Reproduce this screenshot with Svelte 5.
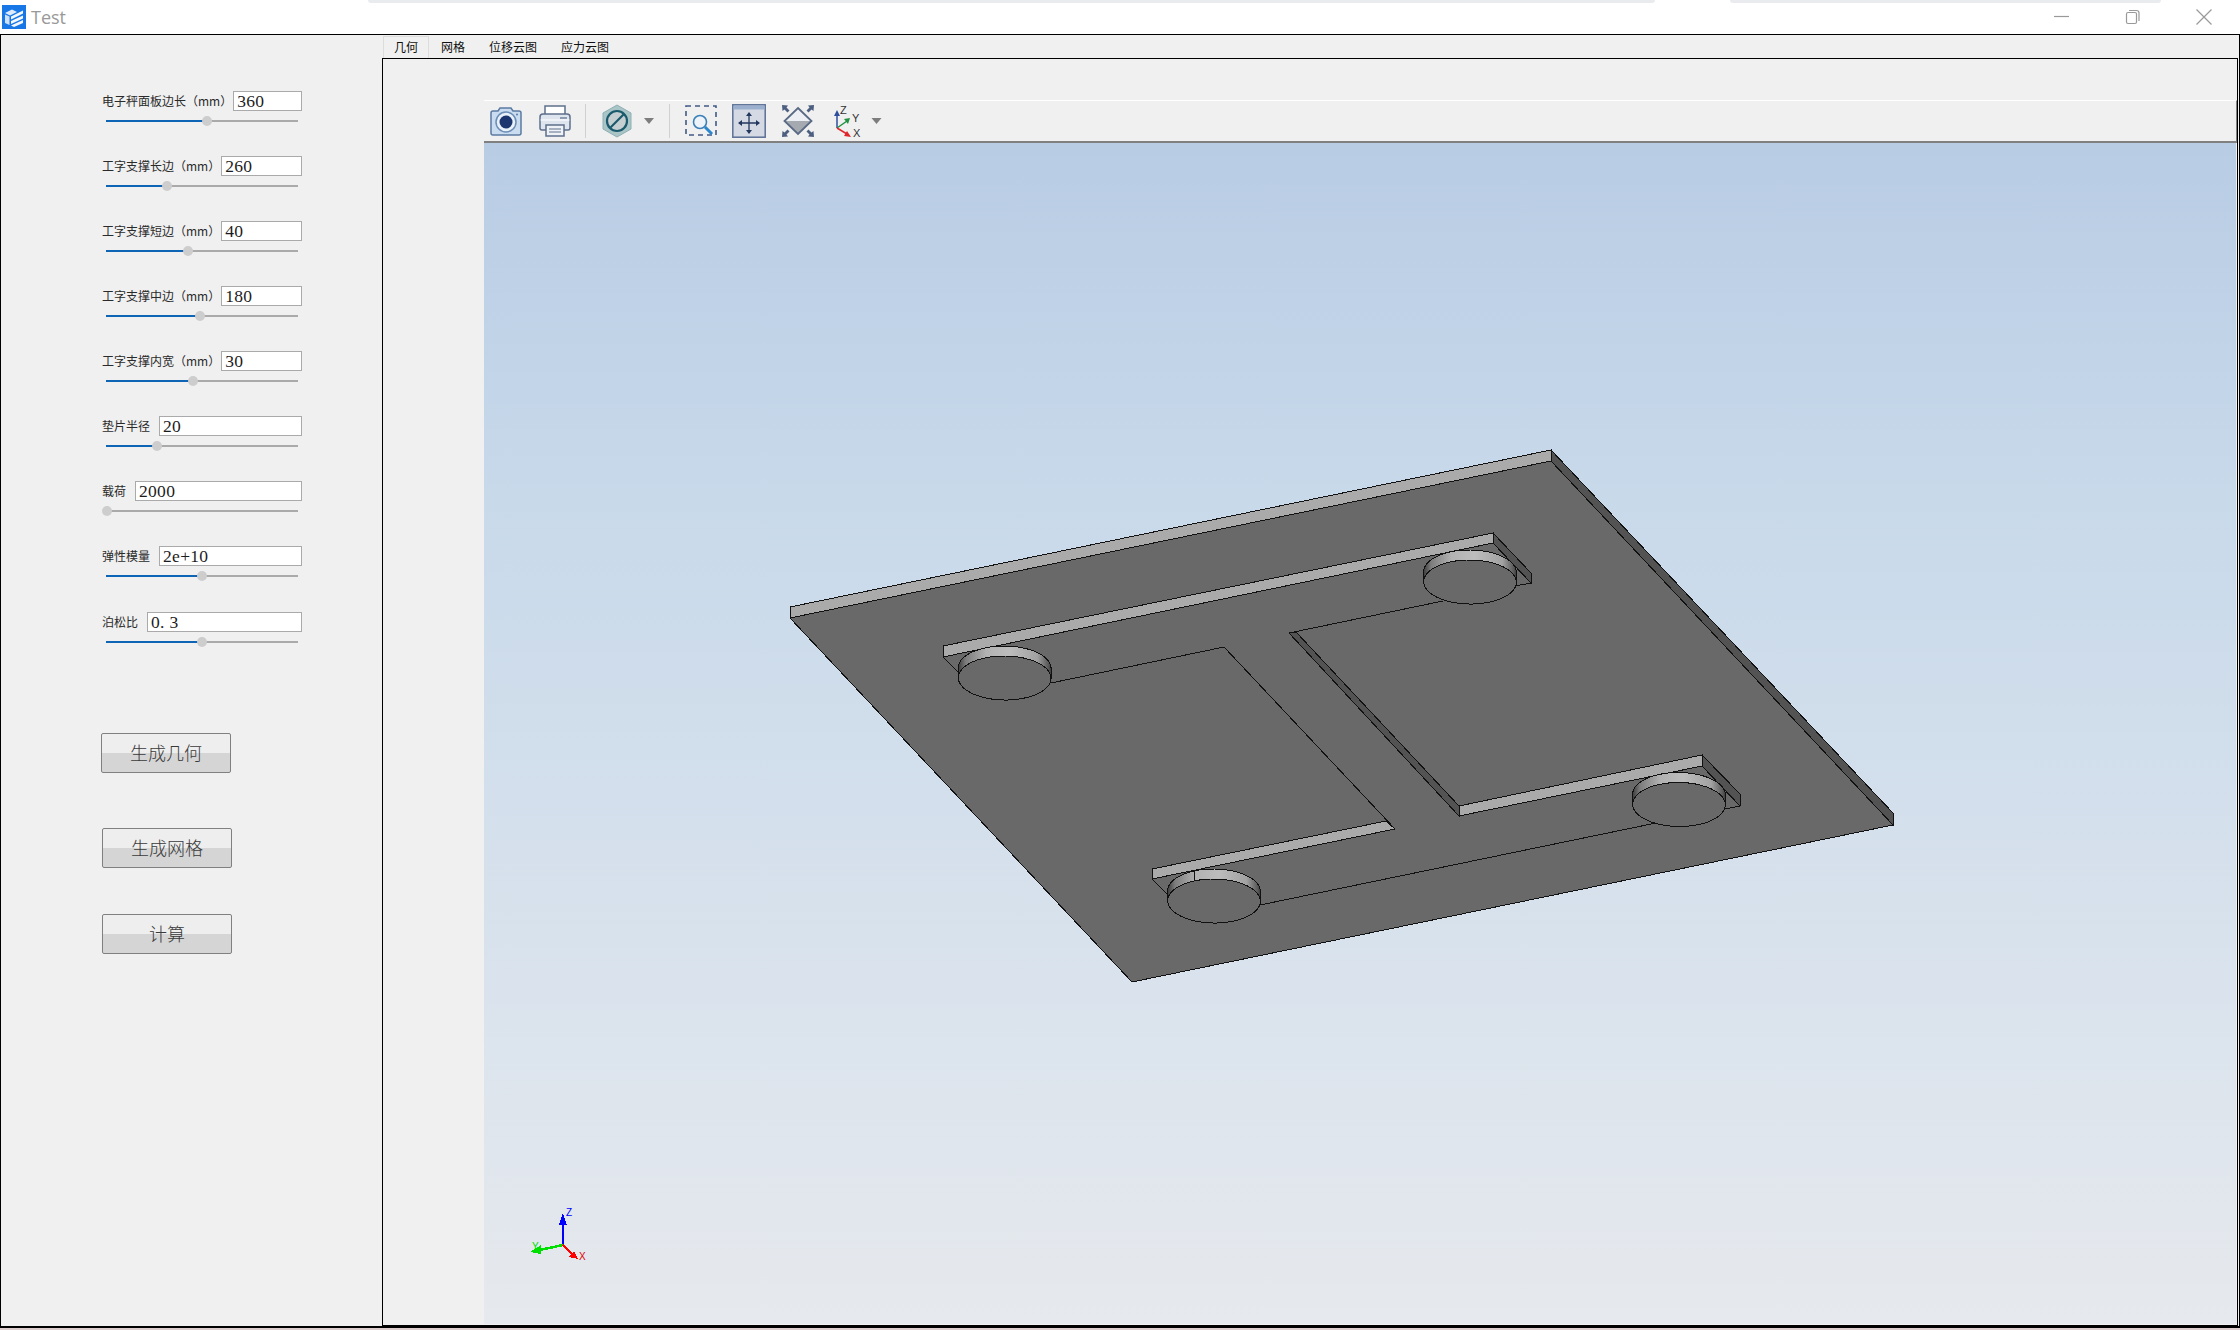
<script lang="ts">
	const fields = [
		{ label: '电子秤面板边长（mm）', value: '360', thumb: 101 },
		{ label: '工字支撑长边（mm）', value: '260', thumb: 61 },
		{ label: '工字支撑短边（mm）', value: '40', thumb: 82 },
		{ label: '工字支撑中边（mm）', value: '180', thumb: 94 },
		{ label: '工字支撑内宽（mm）', value: '30', thumb: 87 },
		{ label: '垫片半径', value: '20', thumb: 51 },
		{ label: '载荷', value: '2000', thumb: 1 },
		{ label: '弹性模量', value: '2e+10', thumb: 96 },
		{ label: '泊松比', value: '0. 3', thumb: 96 }
	];
	const actions = ['生成几何', '生成网格', '计算'];
	const tabs = ['几何', '网格', '位移云图', '应力云图'];

	// plate axes in screen px per mm, taken from the plate corners
	const ux = 761 / 360;
	const uy = -157 / 360;
	const vx = 342 / 360;
	const vy = 364 / 360;
	const R = 20;
	const H = 10;

	const pad = [
		{ x: 1004.7, y: 678 },
		{ x: 1470, y: 582 },
		{ x: 1214, y: 901 },
		{ x: 1679, y: 804.5 }
	];

	function pt(c: { x: number; y: number }, t: number, dz = 0) {
		const x = c.x + R * (Math.cos(t) * ux + Math.sin(t) * vx);
		const y = c.y + R * (Math.cos(t) * uy + Math.sin(t) * vy) - dz;
		return `${x.toFixed(1)} ${y.toFixed(1)}`;
	}

	function ellipse(c: { x: number; y: number }, dz = 0) {
		const pts = [];
		for (let i = 0; i < 72; i++) pts.push(pt(c, (i / 72) * Math.PI * 2, dz));
		return 'M' + pts.join('L') + 'Z';
	}

	// side of the pad: upper half of the raised rim, closed down to the lower ellipse
	function side(c: { x: number; y: number }) {
		const t0 = Math.atan2(vx, ux);
		const pts = [];
		for (let i = 0; i <= 36; i++) pts.push(pt(c, t0 - (i / 36) * Math.PI, H));
		pts.push(pt(c, t0 - Math.PI, 0));
		pts.push(pt(c, t0, 0));
		return 'M' + pts.join('L') + 'Z';
	}
</script>

<div class="window">
	<header class="titlebar">
		<span class="ghost ghost-a"></span>
		<span class="ghost ghost-b"></span>
		<svg class="logo" viewBox="0 0 24 24">
			<rect width="24" height="24" fill="#1877e6" />
			<path d="M3 8 10 4.5 15 7 8 10.5Z" fill="#dfeafa" />
			<path d="M3 9.5 7.5 11.5V20L3 18Z" fill="#cfe0f7" />
			<path d="M9 11.5 21 5.5V8.5L9 14.5Z M9 16 21 10.5V13.5L9 19Z M9 20.5 21 15V18L12 22Z" fill="#f4f8fe" />
		</svg>
		<span class="title">Test</span>
		<div class="controls">
			<svg viewBox="0 0 16 16"><path d="M0 7.5H15" /></svg>
			<svg viewBox="0 0 16 16"><rect x="1.5" y="3.5" width="10" height="11" rx="1.5" /><path d="M4 1.5H11.5Q14 1.5 14 4V12" /></svg>
			<svg viewBox="0 0 16 16"><path d="M.5 .5 15.5 15.5M15.5 .5 .5 15.5" /></svg>
		</div>
	</header>

	<div class="body">
		<aside class="params">
			{#each fields as f}
				<div class="field">
					<div class="line">
						<label for={f.label} class:unit={f.label.endsWith('）')}>{f.label}</label>
						<input id={f.label} value={f.value} />
					</div>
					<div class="track">
						<div class="fill" style="width:{f.thumb}px"></div>
						<div class="thumb" style="left:{f.thumb}px"></div>
					</div>
				</div>
			{/each}
			<div class="actions">
				{#each actions as a}
					<button>{a}</button>
				{/each}
			</div>
		</aside>

		<section class="main">
			<nav class="tabs">
				{#each tabs as t, i}
					<span class="tab" class:active={i === 0}>{t}</span>
				{/each}
			</nav>
			<div class="page">
				<div class="toolbar">
					<svg class="tool" viewBox="0 0 34 34">
						<path d="M2 9Q2 7 4 7H9L11 4H22L24 7H30Q32 7 32 9V29Q32 31 30 31H4Q2 31 2 29Z" fill="#c9dcf0" stroke="#5b7ba3" stroke-width="1.5" />
						<circle cx="17" cy="18" r="10" fill="#e9f1f9" stroke="#6c8db6" stroke-width="1.5" />
						<circle cx="17" cy="18" r="6.5" fill="#1c366f" />
						<circle cx="28" cy="10.5" r="1" fill="#5b7ba3" />
					</svg>
					<svg class="tool" viewBox="0 0 34 34">
						<rect x="7" y="2" width="20" height="10" fill="#fff" stroke="#5d6f8b" stroke-width="1.5" />
						<path d="M2 13Q2 10 5 10H29Q32 10 32 13V24Q32 26 30 26H4Q2 26 2 24Z" fill="#dfe5ee" stroke="#5d6f8b" stroke-width="1.5" />
						<rect x="22" y="13" width="7" height="2" fill="#8d9bb0" />
						<path d="M2.5 16H31.5" stroke="#fff" />
						<rect x="8" y="21" width="18" height="11" fill="#eef1f6" stroke="#5d6f8b" stroke-width="1.5" />
						<path d="M11 25H23M11 28H23" stroke="#8d9bb0" stroke-width="1.5" />
					</svg>
					<span class="sep"></span>
					<svg class="tool" viewBox="0 0 34 34">
						<path d="M17 1 31 9V25L17 33 3 25V9Z" fill="#a9c5c7" stroke="#8fb0b3" />
						<circle cx="17" cy="17" r="10" fill="#c5cfd1" stroke="#1a5a6c" stroke-width="2.2" />
						<path d="M10 24 24 10" stroke="#1a5a6c" stroke-width="2.2" />
					</svg>
					<svg class="caret" viewBox="0 0 10 6"><path d="M0 0H10L5 6Z" /></svg>
					<span class="sep sep-b"></span>
					<svg class="tool" viewBox="0 0 34 34">
						<rect x="2" y="2" width="30" height="29" fill="none" stroke="#415a85" stroke-width="1.6" stroke-dasharray="5 4" />
						<circle cx="16" cy="18" r="6.5" fill="#eef3f9" stroke="#3b7fb8" stroke-width="1.6" />
						<path d="M21 23 28 30" stroke="#2c86cc" stroke-width="3" />
					</svg>
					<svg class="tool fit" viewBox="0 0 34 34">
						<rect x=".8" y=".8" width="32.4" height="32.4" fill="#d4d9e3" stroke="#5b7096" stroke-width="1.5" />
						<rect x="1.5" y="1.5" width="31" height="4" fill="#9bb0ce" />
						<path d="M17 9V29M7 19H27" stroke="#23375f" stroke-width="1.3" />
						<path d="M17 8 20 12H14ZM17 30 14 26H20ZM6 19 10 16V22ZM28 19 24 22V16Z" fill="#23375f" />
					</svg>
					<svg class="tool" viewBox="0 0 34 34">
						<path d="M17 4 30.5 17H3.5Z" fill="#eceff3" />
						<path d="M3.5 17H30.5L17 30Z" fill="#a5a9b0" />
						<path d="M17 4 30.5 17 17 30 3.5 17Z" fill="none" stroke="#5a6a85" stroke-width="1.8" />
						<path d="M1 1 7 1.500 5.500 3.500 8.500 6.500 6.500 8.500 3.500 5.500 1.500 7Z" fill="#4d5f80" />
						<path d="M33 1 27 1.500 28.500 3.500 25.500 6.500 27.500 8.500 30.500 5.500 32.500 7Z" fill="#4d5f80" />
						<path d="M1 33 7 32.500 5.500 30.500 8.500 27.500 6.500 25.500 3.500 28.500 1.500 27Z" fill="#4d5f80" />
						<path d="M33 33 27 32.500 28.500 30.500 25.500 27.500 27.500 25.500 30.500 28.500 32.500 27Z" fill="#4d5f80" />
					</svg>
					<svg class="tool axes" viewBox="0 0 34 34">
						<path d="M7 24V11" stroke="#2b4f9e" stroke-width="1.5" />
						<path d="M7 6 10 12H4Z" fill="#2b4f9e" />
						<path d="M7 24 17 17" stroke="#1f9141" stroke-width="1.5" />
						<path d="M20 14 18 20 14 15Z" fill="#1f9141" />
						<path d="M7 24 17 30" stroke="#e0252b" stroke-width="1.5" />
						<path d="M21 33 14 32 17 27Z" fill="#e0252b" />
						<text x="10" y="9.500">Z</text>
						<text x="22" y="18">Y</text>
						<text x="23" y="32.500">X</text>
					</svg>
					<svg class="caret caret-b" viewBox="0 0 10 6"><path d="M0 0H10L5 6Z" /></svg>
				</div>

				<div class="view">
					<svg class="scene" viewBox="484 143 1753 1181" preserveAspectRatio="xMinYMin slice">
						<defs>
							<linearGradient id="rim" x1="0" x2="1" y1="0" y2="0">
								<stop offset="0" stop-color="#3c3c3c" />
								<stop offset=".08" stop-color="#7c7c7c" />
								<stop offset=".3" stop-color="#b2b2b2" />
								<stop offset=".55" stop-color="#bdbdbd" />
								<stop offset=".85" stop-color="#a2a2a2" />
								<stop offset=".97" stop-color="#5a5a5a" />
								<stop offset="1" stop-color="#3c3c3c" />
							</linearGradient>
						</defs>

						<g class="cad">
							<!-- plate -->
							<path class="face" d="M790 618 1551 461 1893 825 1132 982Z" />
							<path class="light" d="M790 607 1551 450 1551 461 790 618Z" />
							<path class="dark" d="M1551 450 1893 813 1893 825 1551 461Z" />

							<!-- I-shaped support walls -->
							<path class="light" d="M943 646 1493 533 1493 543 943 657Z" />
							<path class="dark" d="M1493 533 1531 573 1531 583 1493 543Z" />
							<path class="light" d="M1152 869 1386 821 1395 829 1152 879Z" />
							<path class="light" d="M1459 806 1702 755 1702 766 1459 816Z" />
							<path class="dark" d="M1702 755 1741 795 1740 806 1702 766Z" />
							<path class="dark" d="M1289 633 1296 632 1459 806 1459 816Z" />

							<!-- floor lines -->
							<path class="edge" d="M943 657 959 673M1531 583 1515 586M1051 683 1224 647 1395 829M1289 633 1443 601" />
							<path class="edge" d="M1152 879 1168 895M1740 806 1725 809M1260 905 1656 823" />

							{#each pad as c}
								<path class="rim" d={side(c)} />
								<path class="face" d={ellipse(c)} />
							{/each}
							<path class="edge" d="M1194 870V880" />
						</g>

						<!-- orientation triad -->
						<g class="triad">
							<path d="M563 1245V1222" stroke="#0000ff" stroke-width="2" />
							<path d="M563 1213 567 1225H559Z" fill="#0000ff" />
							<path d="M563 1245 535 1251" stroke="#00e000" stroke-width="2.500" />
							<path d="M530 1252 541 1245 541 1254Z" fill="#00e000" />
							<path d="M563 1245 572 1254" stroke="#ff0000" stroke-width="2" />
							<path d="M578 1259 569 1257 574 1251Z" fill="#ff0000" />
							<text x="566" y="1216" fill="#0000ff">Z</text>
							<text x="532" y="1250" fill="#00e000">Y</text>
							<text x="579" y="1260" fill="#e00000">X</text>
						</g>
					</svg>
				</div>
			</div>
		</section>
	</div>
</div>

<style>
	:global(body) {
		margin: 0;
		background: #fff;
	}

	.window {
		display: flex;
		flex-direction: column;
		width: 2240px;
		height: 1330px;
		font-family: 'Noto Sans CJK SC', 'Liberation Sans', sans-serif;
		color: #222;
		border-bottom: 2px solid #dccccc;
		box-sizing: border-box;
	}

	.titlebar {
		position: relative;
		display: flex;
		align-items: center;
		flex: none;
		height: 34px;
		padding-left: 2px;
		box-sizing: border-box;
	}

	.ghost {
		position: absolute;
		top: 0;
		height: 3px;
		background: #e9ebef;
		border-radius: 0 0 6px 6px;
	}

	.ghost-a {
		left: 368px;
		width: 1287px;
	}

	.ghost-b {
		left: 1730px;
		width: 431px;
	}

	.logo {
		width: 24px;
		height: 24px;
	}

	.title {
		margin-left: 5px;
		font: 18px 'Open Sans', sans-serif;
		color: #999;
	}

	.controls {
		display: flex;
		align-items: center;
		gap: 55px;
		margin-left: auto;
		margin-right: 28px;
	}

	.controls svg {
		width: 16px;
		height: 16px;
		fill: none;
		stroke: #999;
		stroke-width: 1.2;
	}

	.body {
		display: flex;
		flex: 1;
		min-height: 0;
		border: 1px solid #000;
		border-bottom-width: 2px;
		background: #f0f0f0;
	}

	.params {
		flex: none;
		width: 381px;
		padding: 56px 0 0 100px;
		box-sizing: border-box;
	}

	.field {
		width: 201px;
		height: 65px;
	}

	.field:nth-child(9) {
		margin-top: 1px;
	}

	.line {
		display: flex;
		align-items: center;
		padding-left: 1px;
	}

	label {
		flex: none;
		margin-right: 9px;
		font-size: 12px;
		line-height: 20px;
		color: #2a2a2a;
		white-space: nowrap;
	}

	label.unit {
		margin-right: 1px;
	}

	input {
		flex: 1;
		min-width: 0;
		height: 20px;
		padding: 1px 3px 0;
		border: 1px solid #aaa;
		border-radius: 0;
		outline: none;
		background: #fff;
		box-sizing: border-box;
		font: 17.5px 'Liberation Serif', serif;
		letter-spacing: 0.3px;
		color: #1c1c1c;
	}

	.track {
		position: relative;
		width: 192px;
		height: 2px;
		margin: 9px 0 0 5px;
		background: #aaa;
	}

	.fill {
		height: 100%;
		background: #0f65b5;
	}

	.thumb {
		position: absolute;
		top: -4px;
		width: 10px;
		height: 10px;
		margin-left: -5px;
		border-radius: 50%;
		background: #cdcdcd;
	}

	.actions {
		display: flex;
		flex-direction: column;
		align-items: flex-start;
		margin-top: 56px;
	}

	button {
		width: 130px;
		height: 40px;
		padding: 0 0 3px;
		border: 1px solid #808080;
		border-radius: 2px;
		background: linear-gradient(#eeeeee 50%, #d5d5d5 50%);
		font: 300 18px 'Noto Sans CJK SC', sans-serif;
		color: #3a3a3a;
	}

	button + button {
		margin: 55px 0 0 1px;
	}

	button:last-child {
		margin-top: 46px;
	}

	.main {
		display: flex;
		flex-direction: column;
		flex: 1;
		min-width: 0;
	}

	.tabs {
		display: flex;
		flex: none;
		height: 22px;
		margin-top: 1px;
		font-size: 12px;
		line-height: 22px;
		color: #111;
	}

	.tab {
		padding: 0 12px;
		white-space: nowrap;
	}

	.tab:first-child {
		margin-left: 1px;
	}

	.tab.active {
		padding: 0 10px;
		border: 1px solid #dcdcdc;
		border-bottom: 0;
		box-sizing: border-box;
		line-height: 20px;
	}

	.page {
		display: flex;
		flex-direction: column;
		flex: 1;
		min-height: 0;
		padding: 41px 0 1px 101px;
		border: 1px solid #000;
		margin-right: 1px;
	}

	.toolbar {
		display: flex;
		align-items: center;
		flex: none;
		height: 43px;
		padding-left: 5px;
		border-top: 1px solid #fff;
		border-bottom: 2px solid #808080;
		border-right: 1px solid #808080;
		box-sizing: border-box;
	}

	.tool {
		flex: none;
		width: 34px;
		height: 34px;
	}

	.tool + .tool {
		margin-left: 15px;
	}

	.tool.fit {
		margin-left: 14px;
	}

	.sep {
		flex: none;
		width: 1px;
		height: 34px;
		margin: 0 14px 0 13px;
		background: #d0d0d0;
	}

	.caret {
		flex: none;
		width: 10px;
		height: 6px;
		margin-left: 10px;
		fill: #7d7d7d;
	}

	.caret-b {
		width: 11px;
		margin-left: 7px;
	}

	.sep-b {
		margin-left: 15px;
	}

	.axes {
		overflow: visible;
	}

	.axes text {
		font: 11px 'Liberation Sans', sans-serif;
		fill: #333;
	}

	.view {
		flex: 1;
		min-height: 0;
		margin-right: 1px;
		background: linear-gradient(#b8cce4 0%, #c8d9ea 30%, #dae3ed 72%, #e6e9ed 100%);
	}

	.scene {
		display: block;
		width: 100%;
		height: 100%;
	}

	.cad path {
		shape-rendering: crispEdges;
		stroke: #111;
		stroke-width: 1;
	}

	.cad .face {
		fill: #696969;
	}

	.cad .light {
		fill: #aaaaaa;
	}

	.cad .dark {
		fill: #535353;
	}

	.cad .rim {
		fill: url(#rim);
	}

	.cad .edge {
		fill: none;
	}

	.triad path {
		shape-rendering: crispEdges;
	}

	.triad text {
		font: 10px 'Liberation Sans', sans-serif;
	}
</style>
